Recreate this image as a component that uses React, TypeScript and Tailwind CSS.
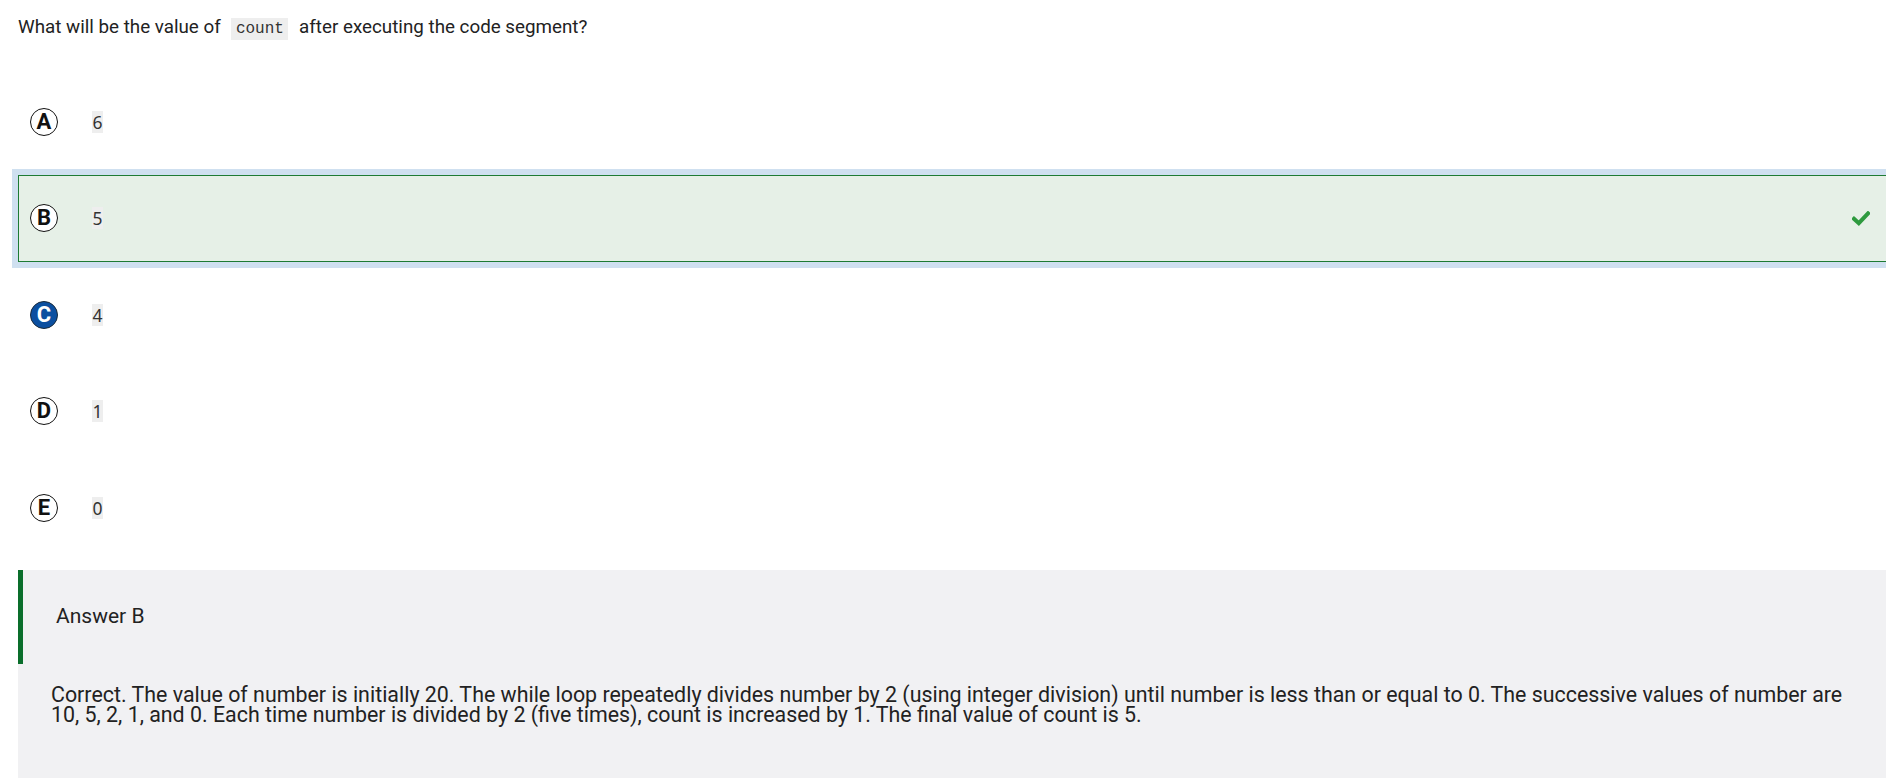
const options = [
  { letter: 'A', value: '6' },
  { letter: 'B', value: '5', correct: true },
  { letter: 'C', value: '4', chosen: true },
  { letter: 'D', value: '1' },
  { letter: 'E', value: '0' },
];

function Bubble({ letter, chosen }: { letter: string; chosen?: boolean }) {
  return (
    <span
      className={
        chosen
          ? 'flex h-[28px] w-[28px] shrink-0 items-center justify-center rounded-full border border-[#1a2a3a] bg-[#0b4fa0] text-[22px] font-bold leading-none text-white'
          : 'flex h-[28px] w-[28px] shrink-0 items-center justify-center rounded-full border border-[#111] bg-white text-[22px] font-bold leading-none text-[#111]'
      }
    >
      {letter}
    </span>
  );
}

export default function App() {
  return (
    <div className="flex min-h-screen w-full flex-col overflow-hidden bg-white font-['Roboto','Liberation_Sans',sans-serif] text-[#222]">
      <div className="flex w-[1900px] flex-1 flex-col pl-[18px]">
        <p className="pt-[14px] text-[18.8px] leading-[27px] text-[#222]">
          What will be the value of{' '}
          <code className="mx-[6px] bg-[#eeeeee] px-[4.5px] py-[2px] font-['Liberation_Mono',monospace] text-[16px] text-[#333]">
            count
          </code>{' '}
          after executing the code segment?
        </p>

        <div className="mt-[35px] flex flex-col gap-[9.5px]">
          {options.map((o) => (
            <div
              key={o.letter}
              className={
                o.correct
                  ? 'flex h-[87px] items-center border border-[#1e7b34] bg-[#e6f0e7] pl-[11px] shadow-[0_0_0_6px_#cfe0f0]'
                  : 'flex h-[87px] items-center border border-transparent pl-[11px]'
              }
            >
              <Bubble letter={o.letter} chosen={o.chosen} />
              <code className="ml-[34px] bg-[#eeeeee] px-[0.5px] font-['Noto_Sans',sans-serif] text-[17.5px] leading-[22px] text-[#333]">
                {o.value}
              </code>
              {o.correct && (
                <svg className="ml-auto mr-[29px]" width="18" height="15" viewBox="0 0 18 15">
                  <path d="M2 7.8 L6.8 12.2 L16 2.4" fill="none" stroke="#2e9a3f" strokeWidth="4" strokeLinecap="square" />
                </svg>
              )}
            </div>
          ))}
        </div>

        <section className="mt-[18.5px] flex-1 bg-[#f1f1f3]">
          <div className="flex h-[94px] items-center border-l-[5px] border-[#0a6e2b] pl-[33px] text-[21px] text-[#222]">
            Answer B
          </div>
          <p className="whitespace-nowrap pl-[33px] pt-[21px] text-[21.4px] leading-[20px] text-[#222]">
            Correct. The value of number is initially 20. The while loop repeatedly divides number by 2 (using integer division) until number is less than or equal to 0. The successive values of number are
            <br />
            10, 5, 2, 1, and 0. Each time number is divided by 2 (five times), count is increased by 1. The final value of count is 5.
          </p>
        </section>
      </div>
    </div>
  );
}
